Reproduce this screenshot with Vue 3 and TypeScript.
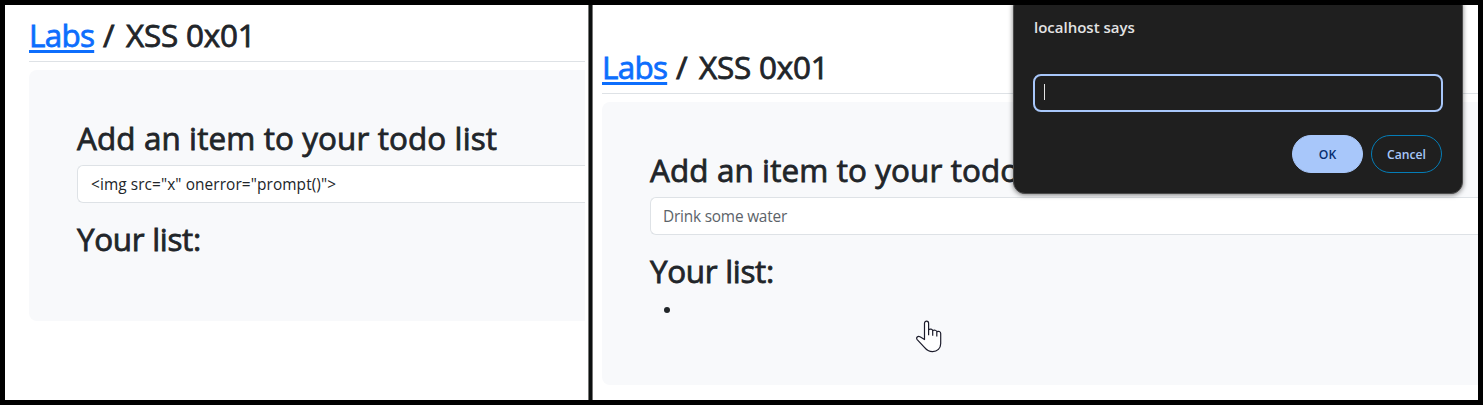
<script setup lang="ts">
import { ref } from 'vue'

const payload = ref('<img src="x" onerror="prompt()">')
const entry = ref('')
</script>

<template>
  <div class="frame">
    <section class="pane left">
      <div class="clip">
        <h1 class="crumb"><a class="labs">Labs</a><span class="sep">/</span><span class="name">XSS 0x01</span></h1>
        <div class="card">
          <h2><span class="t-add">Add an item to your todo list</span></h2>
          <div class="field"><span class="t-code">{{ payload }}</span></div>
          <h2><span class="t-list">Your list:</span></h2>
        </div>
      </div>
    </section>
    <div class="divider"></div>
    <section class="pane right">
      <h1 class="crumb"><a class="labs">Labs</a><span class="sep">/</span><span class="name">XSS 0x01</span></h1>
      <div class="card">
        <h2><span class="t-add">Add an item to your todo list</span></h2>
        <div class="field"><span class="t-ph">Drink some water</span></div>
        <h2><span class="t-list">Your list:</span></h2>
        <div class="item"><i class="bullet"></i></div>
      </div>
      <svg class="cursor" width="26" height="34" viewBox="0 0 26 34">
        <path d="M8.5 19.5V3.2C8.5 .4 12.6.4 12.6 3.2V9.7C14.2 8.6 16.3 9 16.7 10.6C18.3 9.7 20.4 10.2 20.8 11.6C22.4 10.9 24.7 11.4 24.7 13.4V23.5C24.7 28.3 21.3 31.6 16.6 31.6C12.8 31.6 10.5 30 8.2 27.1L1.2 19.6C-.3 17.7 1.8 15.6 4 16.8Z" fill="#fff" stroke="#1c1c2b" stroke-width="1.2" stroke-linejoin="round" />
        <path d="M12.6 9.5V15.3M16.7 10.8V15.8M20.8 12V16.5" fill="none" stroke="#1c1c2b" stroke-width="1.2" />
      </svg>
      <div class="dialog">
        <div class="title"><span class="t-says">localhost says</span></div>
        <div class="prompt"><i class="caret"></i>{{ entry }}</div>
        <div class="actions">
          <button class="ok"><span>OK</span></button>
          <button class="cancel"><span>Cancel</span></button>
        </div>
      </div>
    </section>
  </div>
</template>

<style>
body { margin: 0; }
</style>

<style scoped>
* { box-sizing: border-box; }
.frame {
  width: 1483px;
  height: 405px;
  border: 5px solid #000;
  display: flex;
  background: #fff;
  overflow: hidden;
  color: #212529;
  font-family: "Open Sans", "Noto Sans", sans-serif;
}
.pane { position: relative; overflow: hidden; height: 395px; }
.left { width: 583px; padding: 0 3px 0 24px; }
.right { width: 885px; padding: 43px 0 0 9px; }
.clip { padding-top: 11px; }
.divider { width: 5px; background: #0d100f; border: solid #777; border-width: 0 1px; }
.crumb {
  margin: 0 0 8px;
  height: 46px;
  border-bottom: 1px solid #dee2e6;
  font-size: 31.4px;
  line-height: 38px;
  font-weight: 500;
  -webkit-text-stroke: 0.8px currentColor;
  display: flex;
  white-space: nowrap;
}
.labs {
  color: #0d6efd;
  text-decoration: underline;
  text-decoration-thickness: 3px;
  text-underline-offset: 3px;
  text-decoration-skip-ink: none;
  letter-spacing: -0.7px;
  width: 65px;
}
.sep { margin-left: 9px; width: 23px; }
.name { letter-spacing: -0.2px; }
.card {
  background: #f8f9fb;
  border-radius: 8px 0 0 8px;
  padding: 49px 0 0 48px;
  height: 251px;
}
.right .card { height: 283px; }
h2 {
  margin: 0 0 8px;
  height: 38px;
  font-size: 31.4px;
  line-height: 38px;
  font-weight: 500;
  -webkit-text-stroke: 0.8px currentColor;
  white-space: nowrap;
}
.t-add { letter-spacing: 0.12px; }
.t-list { letter-spacing: -0.3px; }
.field {
  height: 38px;
  margin-bottom: 17px;
  border: 1px solid #dee2e6;
  border-right: 0;
  border-radius: 6px 0 0 6px;
  background: #fff;
  padding-left: 12px;
  font-size: 15.4px;
  line-height: 37px;
  white-space: nowrap;
}
.t-code { margin-left: 1px; letter-spacing: 0.1px; }
.t-ph { color: #5c6369; letter-spacing: -0.2px; }
.item { height: 24px; padding: 0 0 0 14px; display: flex; align-items: center; }
.bullet { width: 6px; height: 6px; border-radius: 50%; background: #212529; }
.cursor { position: absolute; left: 323px; top: 315px; }
.dialog {
  position: absolute;
  left: 420px;
  top: -10px;
  width: 450px;
  height: 199px;
  padding: 19px 20px 0;
  background: #1f1f1f;
  border: 1px solid #4b4b4b;
  border-radius: 12px;
  box-shadow: 0 1px 5px rgba(0, 0, 0, 0.5);
  color: #e3e3e3;
}
.title { height: 24px; font-size: 15px; line-height: 24px; font-weight: 600; white-space: nowrap; }
.prompt {
  margin: 35px -1px 0;
  height: 38px;
  border: 2px solid #a8c7fa;
  border-radius: 8px;
  padding: 8px 0 0 9px;
}
.caret { display: block; width: 1px; height: 16px; background: #e3e3e3; }
.actions { display: flex; justify-content: flex-end; gap: 8px; margin-top: 23px; }
button {
  width: 71px;
  height: 38px;
  border-radius: 19px;
  padding: 2px 0 0;
  font: 600 12.2px/34px "Open Sans", sans-serif;
}
.ok { background: #a8c7fa; border: 1px solid #a8c7fa; color: #062e6f; }
.cancel { background: transparent; border: 1px solid #047db7; color: #a8c7fa; }
</style>
